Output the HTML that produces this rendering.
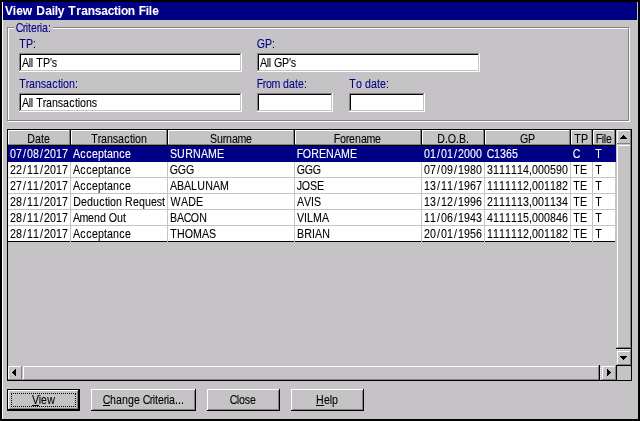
<!DOCTYPE html>
<html><head><meta charset="utf-8"><title>View Daily Transaction File</title>
<style>
html,body{margin:0;padding:0;background:#000;overflow:hidden}
#w{position:relative;width:640px;height:421px;background:#000;overflow:hidden}
#w i{position:absolute;display:block}
#w svg{position:absolute;left:0;top:0;will-change:transform}
#w text{font-family:"Liberation Sans",sans-serif;font-size:13px;white-space:pre;stroke-width:.1px}
#w text.b{font-weight:bold;stroke-width:.05px}
.focus{position:absolute;left:11px;top:393px;width:63px;height:12px;border:1px dotted #000}
</style></head><body>
<div id="w">
<i style="left:2px;top:2px;width:636px;height:417px;background:#c6c3c6"></i>
<i style="left:2px;top:2px;width:1px;height:417px;background:#fff"></i>
<i style="left:3px;top:2px;width:634px;height:18px;background:#000084"></i>
<i style="left:8px;top:28px;width:622px;height:1px;background:#fff"></i>
<i style="left:8px;top:121px;width:622px;height:1px;background:#fff"></i>
<i style="left:8px;top:28px;width:1px;height:94px;background:#fff"></i>
<i style="left:629px;top:28px;width:1px;height:94px;background:#fff"></i>
<i style="left:7px;top:27px;width:622px;height:1px;background:#848284"></i>
<i style="left:7px;top:120px;width:622px;height:1px;background:#848284"></i>
<i style="left:7px;top:27px;width:1px;height:94px;background:#848284"></i>
<i style="left:628px;top:27px;width:1px;height:94px;background:#848284"></i>
<i style="left:14px;top:27px;width:39px;height:2px;background:#c6c3c6"></i>
<i style="left:19px;top:53px;width:223px;height:19px;background:#fff"></i>
<i style="left:19px;top:53px;width:223px;height:1px;background:#848284"></i>
<i style="left:19px;top:53px;width:1px;height:19px;background:#848284"></i>
<i style="left:20px;top:54px;width:221px;height:1px;background:#000"></i>
<i style="left:20px;top:54px;width:1px;height:17px;background:#000"></i>
<i style="left:20px;top:70px;width:221px;height:1px;background:#c6c3c6"></i>
<i style="left:240px;top:54px;width:1px;height:17px;background:#c6c3c6"></i>
<i style="left:19px;top:71px;width:223px;height:1px;background:#fff"></i>
<i style="left:241px;top:53px;width:1px;height:19px;background:#fff"></i>
<i style="left:257px;top:53px;width:223px;height:19px;background:#fff"></i>
<i style="left:257px;top:53px;width:223px;height:1px;background:#848284"></i>
<i style="left:257px;top:53px;width:1px;height:19px;background:#848284"></i>
<i style="left:258px;top:54px;width:221px;height:1px;background:#000"></i>
<i style="left:258px;top:54px;width:1px;height:17px;background:#000"></i>
<i style="left:258px;top:70px;width:221px;height:1px;background:#c6c3c6"></i>
<i style="left:478px;top:54px;width:1px;height:17px;background:#c6c3c6"></i>
<i style="left:257px;top:71px;width:223px;height:1px;background:#fff"></i>
<i style="left:479px;top:53px;width:1px;height:19px;background:#fff"></i>
<i style="left:19px;top:93px;width:223px;height:19px;background:#fff"></i>
<i style="left:19px;top:93px;width:223px;height:1px;background:#848284"></i>
<i style="left:19px;top:93px;width:1px;height:19px;background:#848284"></i>
<i style="left:20px;top:94px;width:221px;height:1px;background:#000"></i>
<i style="left:20px;top:94px;width:1px;height:17px;background:#000"></i>
<i style="left:20px;top:110px;width:221px;height:1px;background:#c6c3c6"></i>
<i style="left:240px;top:94px;width:1px;height:17px;background:#c6c3c6"></i>
<i style="left:19px;top:111px;width:223px;height:1px;background:#fff"></i>
<i style="left:241px;top:93px;width:1px;height:19px;background:#fff"></i>
<i style="left:257px;top:93px;width:76px;height:19px;background:#fff"></i>
<i style="left:257px;top:93px;width:76px;height:1px;background:#848284"></i>
<i style="left:257px;top:93px;width:1px;height:19px;background:#848284"></i>
<i style="left:258px;top:94px;width:74px;height:1px;background:#000"></i>
<i style="left:258px;top:94px;width:1px;height:17px;background:#000"></i>
<i style="left:258px;top:110px;width:74px;height:1px;background:#c6c3c6"></i>
<i style="left:331px;top:94px;width:1px;height:17px;background:#c6c3c6"></i>
<i style="left:257px;top:111px;width:76px;height:1px;background:#fff"></i>
<i style="left:332px;top:93px;width:1px;height:19px;background:#fff"></i>
<i style="left:349px;top:93px;width:76px;height:19px;background:#fff"></i>
<i style="left:349px;top:93px;width:76px;height:1px;background:#848284"></i>
<i style="left:349px;top:93px;width:1px;height:19px;background:#848284"></i>
<i style="left:350px;top:94px;width:74px;height:1px;background:#000"></i>
<i style="left:350px;top:94px;width:1px;height:17px;background:#000"></i>
<i style="left:350px;top:110px;width:74px;height:1px;background:#c6c3c6"></i>
<i style="left:423px;top:94px;width:1px;height:17px;background:#c6c3c6"></i>
<i style="left:349px;top:111px;width:76px;height:1px;background:#fff"></i>
<i style="left:424px;top:93px;width:1px;height:19px;background:#fff"></i>
<i style="left:7px;top:129px;width:625px;height:252px;background:#000"></i>
<i style="left:8px;top:130px;width:623px;height:250px;background:#c6c3c6"></i>
<i style="left:8px;top:130px;width:62px;height:1px;background:#fff"></i>
<i style="left:8px;top:130px;width:1px;height:15px;background:#fff"></i>
<i style="left:8px;top:144px;width:62px;height:1px;background:#848284"></i>
<i style="left:69px;top:130px;width:1px;height:15px;background:#848284"></i>
<i style="left:70px;top:130px;width:1px;height:16px;background:#000"></i>
<i style="left:71px;top:130px;width:96px;height:1px;background:#fff"></i>
<i style="left:71px;top:130px;width:1px;height:15px;background:#fff"></i>
<i style="left:71px;top:144px;width:96px;height:1px;background:#848284"></i>
<i style="left:166px;top:130px;width:1px;height:15px;background:#848284"></i>
<i style="left:167px;top:130px;width:1px;height:16px;background:#000"></i>
<i style="left:168px;top:130px;width:126px;height:1px;background:#fff"></i>
<i style="left:168px;top:130px;width:1px;height:15px;background:#fff"></i>
<i style="left:168px;top:144px;width:126px;height:1px;background:#848284"></i>
<i style="left:293px;top:130px;width:1px;height:15px;background:#848284"></i>
<i style="left:294px;top:130px;width:1px;height:16px;background:#000"></i>
<i style="left:295px;top:130px;width:126px;height:1px;background:#fff"></i>
<i style="left:295px;top:130px;width:1px;height:15px;background:#fff"></i>
<i style="left:295px;top:144px;width:126px;height:1px;background:#848284"></i>
<i style="left:420px;top:130px;width:1px;height:15px;background:#848284"></i>
<i style="left:421px;top:130px;width:1px;height:16px;background:#000"></i>
<i style="left:422px;top:130px;width:62px;height:1px;background:#fff"></i>
<i style="left:422px;top:130px;width:1px;height:15px;background:#fff"></i>
<i style="left:422px;top:144px;width:62px;height:1px;background:#848284"></i>
<i style="left:483px;top:130px;width:1px;height:15px;background:#848284"></i>
<i style="left:484px;top:130px;width:1px;height:16px;background:#000"></i>
<i style="left:485px;top:130px;width:85px;height:1px;background:#fff"></i>
<i style="left:485px;top:130px;width:1px;height:15px;background:#fff"></i>
<i style="left:485px;top:144px;width:85px;height:1px;background:#848284"></i>
<i style="left:569px;top:130px;width:1px;height:15px;background:#848284"></i>
<i style="left:570px;top:130px;width:1px;height:16px;background:#000"></i>
<i style="left:571px;top:130px;width:21px;height:1px;background:#fff"></i>
<i style="left:571px;top:130px;width:1px;height:15px;background:#fff"></i>
<i style="left:571px;top:144px;width:21px;height:1px;background:#848284"></i>
<i style="left:591px;top:130px;width:1px;height:15px;background:#848284"></i>
<i style="left:592px;top:130px;width:1px;height:16px;background:#000"></i>
<i style="left:593px;top:130px;width:22px;height:1px;background:#fff"></i>
<i style="left:593px;top:130px;width:1px;height:15px;background:#fff"></i>
<i style="left:593px;top:144px;width:22px;height:1px;background:#848284"></i>
<i style="left:614px;top:130px;width:1px;height:15px;background:#848284"></i>
<i style="left:615px;top:130px;width:1px;height:16px;background:#000"></i>
<i style="left:8px;top:145px;width:608px;height:1px;background:#000"></i>
<i style="left:8px;top:146px;width:608px;height:16px;background:#000084"></i>
<i style="left:8px;top:162px;width:607px;height:79px;background:#fff"></i>
<i style="left:8px;top:177px;width:607px;height:1px;background:#c6c3c6"></i>
<i style="left:8px;top:193px;width:607px;height:1px;background:#c6c3c6"></i>
<i style="left:8px;top:209px;width:607px;height:1px;background:#c6c3c6"></i>
<i style="left:8px;top:225px;width:607px;height:1px;background:#c6c3c6"></i>
<i style="left:8px;top:241px;width:607px;height:1px;background:#000"></i>
<i style="left:70px;top:162px;width:1px;height:80px;background:#c6c3c6"></i>
<i style="left:167px;top:162px;width:1px;height:80px;background:#c6c3c6"></i>
<i style="left:294px;top:162px;width:1px;height:80px;background:#c6c3c6"></i>
<i style="left:421px;top:162px;width:1px;height:80px;background:#c6c3c6"></i>
<i style="left:484px;top:162px;width:1px;height:80px;background:#c6c3c6"></i>
<i style="left:570px;top:162px;width:1px;height:80px;background:#c6c3c6"></i>
<i style="left:592px;top:162px;width:1px;height:80px;background:#c6c3c6"></i>
<i style="left:617px;top:130px;width:14px;height:1px;background:#fff"></i>
<i style="left:617px;top:130px;width:1px;height:14px;background:#fff"></i>
<i style="left:617px;top:143px;width:14px;height:1px;background:#848284"></i>
<i style="left:630px;top:130px;width:1px;height:14px;background:#848284"></i>
<i style="left:623px;top:135px;width:1px;height:1px;background:#000"></i>
<i style="left:622px;top:136px;width:3px;height:1px;background:#000"></i>
<i style="left:621px;top:137px;width:5px;height:1px;background:#000"></i>
<i style="left:620px;top:138px;width:7px;height:1px;background:#000"></i>
<i style="left:617px;top:145px;width:13px;height:1px;background:#fff"></i>
<i style="left:617px;top:145px;width:1px;height:202px;background:#fff"></i>
<i style="left:630px;top:144px;width:1px;height:204px;background:#848284"></i>
<i style="left:617px;top:347px;width:14px;height:1px;background:#848284"></i>
<i style="left:616px;top:348px;width:16px;height:1px;background:#000"></i>
<i style="left:617px;top:349px;width:1px;height:1px;background:#fff"></i>
<i style="left:619px;top:349px;width:1px;height:1px;background:#fff"></i>
<i style="left:621px;top:349px;width:1px;height:1px;background:#fff"></i>
<i style="left:623px;top:349px;width:1px;height:1px;background:#fff"></i>
<i style="left:625px;top:349px;width:1px;height:1px;background:#fff"></i>
<i style="left:627px;top:349px;width:1px;height:1px;background:#fff"></i>
<i style="left:629px;top:349px;width:1px;height:1px;background:#fff"></i>
<i style="left:617px;top:351px;width:13px;height:1px;background:#fff"></i>
<i style="left:617px;top:351px;width:1px;height:13px;background:#fff"></i>
<i style="left:630px;top:350px;width:1px;height:15px;background:#848284"></i>
<i style="left:617px;top:364px;width:14px;height:1px;background:#848284"></i>
<i style="left:620px;top:356px;width:7px;height:1px;background:#000"></i>
<i style="left:621px;top:357px;width:5px;height:1px;background:#000"></i>
<i style="left:622px;top:358px;width:3px;height:1px;background:#000"></i>
<i style="left:623px;top:359px;width:1px;height:1px;background:#000"></i>
<i style="left:616px;top:365px;width:16px;height:1px;background:#000"></i>
<i style="left:616px;top:365px;width:1px;height:16px;background:#000"></i>
<i style="left:8px;top:366px;width:14px;height:1px;background:#fff"></i>
<i style="left:8px;top:366px;width:1px;height:14px;background:#fff"></i>
<i style="left:8px;top:379px;width:14px;height:1px;background:#848284"></i>
<i style="left:21px;top:366px;width:1px;height:14px;background:#848284"></i>
<i style="left:12px;top:372px;width:1px;height:1px;background:#000"></i>
<i style="left:13px;top:371px;width:1px;height:3px;background:#000"></i>
<i style="left:14px;top:370px;width:1px;height:5px;background:#000"></i>
<i style="left:15px;top:369px;width:1px;height:7px;background:#000"></i>
<i style="left:23px;top:366px;width:575px;height:1px;background:#fff"></i>
<i style="left:23px;top:366px;width:1px;height:13px;background:#fff"></i>
<i style="left:23px;top:379px;width:576px;height:1px;background:#848284"></i>
<i style="left:598px;top:366px;width:1px;height:14px;background:#848284"></i>
<i style="left:599px;top:365px;width:1px;height:16px;background:#000"></i>
<i style="left:600px;top:366px;width:1px;height:1px;background:#fff"></i>
<i style="left:600px;top:368px;width:1px;height:1px;background:#fff"></i>
<i style="left:600px;top:370px;width:1px;height:1px;background:#fff"></i>
<i style="left:600px;top:372px;width:1px;height:1px;background:#fff"></i>
<i style="left:600px;top:374px;width:1px;height:1px;background:#fff"></i>
<i style="left:600px;top:376px;width:1px;height:1px;background:#fff"></i>
<i style="left:600px;top:378px;width:1px;height:1px;background:#fff"></i>
<i style="left:602px;top:366px;width:13px;height:1px;background:#fff"></i>
<i style="left:602px;top:366px;width:1px;height:13px;background:#fff"></i>
<i style="left:615px;top:366px;width:1px;height:14px;background:#848284"></i>
<i style="left:602px;top:379px;width:14px;height:1px;background:#848284"></i>
<i style="left:607px;top:369px;width:1px;height:7px;background:#000"></i>
<i style="left:608px;top:370px;width:1px;height:5px;background:#000"></i>
<i style="left:609px;top:371px;width:1px;height:3px;background:#000"></i>
<i style="left:610px;top:372px;width:1px;height:1px;background:#000"></i>
<i style="left:7px;top:389px;width:73px;height:22px;background:#000"></i>
<i style="left:8px;top:390px;width:71px;height:20px;background:#c6c3c6"></i>
<i style="left:8px;top:390px;width:71px;height:1px;background:#fff"></i>
<i style="left:8px;top:390px;width:1px;height:20px;background:#fff"></i>
<i style="left:9px;top:408px;width:69px;height:1px;background:#848284"></i>
<i style="left:77px;top:391px;width:1px;height:18px;background:#848284"></i>
<i style="left:8px;top:409px;width:71px;height:1px;background:#000"></i>
<i style="left:78px;top:390px;width:1px;height:20px;background:#000"></i>
<i style="left:91px;top:389px;width:105px;height:1px;background:#fff"></i>
<i style="left:91px;top:389px;width:1px;height:22px;background:#fff"></i>
<i style="left:92px;top:409px;width:103px;height:1px;background:#848284"></i>
<i style="left:194px;top:390px;width:1px;height:20px;background:#848284"></i>
<i style="left:91px;top:410px;width:105px;height:1px;background:#000"></i>
<i style="left:195px;top:389px;width:1px;height:22px;background:#000"></i>
<i style="left:207px;top:389px;width:73px;height:1px;background:#fff"></i>
<i style="left:207px;top:389px;width:1px;height:22px;background:#fff"></i>
<i style="left:208px;top:409px;width:71px;height:1px;background:#848284"></i>
<i style="left:278px;top:390px;width:1px;height:20px;background:#848284"></i>
<i style="left:207px;top:410px;width:73px;height:1px;background:#000"></i>
<i style="left:279px;top:389px;width:1px;height:22px;background:#000"></i>
<i style="left:291px;top:389px;width:73px;height:1px;background:#fff"></i>
<i style="left:291px;top:389px;width:1px;height:22px;background:#fff"></i>
<i style="left:292px;top:409px;width:71px;height:1px;background:#848284"></i>
<i style="left:362px;top:390px;width:1px;height:20px;background:#848284"></i>
<i style="left:291px;top:410px;width:73px;height:1px;background:#000"></i>
<i style="left:363px;top:389px;width:1px;height:22px;background:#000"></i>
<i style="left:32px;top:405px;width:7px;height:1px;background:#000"></i>
<i style="left:103px;top:405px;width:7px;height:1px;background:#000"></i>
<i style="left:316px;top:405px;width:8px;height:1px;background:#000"></i>
<div class="focus"></div>
<svg width="640" height="421" viewBox="0 0 640 421">
<text class="b" transform="scale(0.92 1)" x="5.4 14.0 17.6 24.8 35.2 39.3 49.1 56.3 59.6 62.7 69.9 74.3 82.8 88.2 95.5 102.9 110.0 117.0 123.9 128.1 131.4 139.0 147.1 150.9 158.5 161.8 165.4" y="15" fill="#fff" stroke="#fff">View Daily Transaction File</text>
<text transform="scale(0.82 1)" x="19.1 27.7 31.5 34.2 37.8 44.8 48.6 51.3 58.6" y="32" fill="#000084" stroke="#000084">Criteria:</text>
<text transform="scale(0.82 1)" x="23.5 31.6 40.3" y="48" fill="#000084" stroke="#000084">TP:</text>
<text transform="scale(0.82 1)" x="313.2 323.1 331.7" y="48" fill="#000084" stroke="#000084">GP:</text>
<text transform="scale(0.82 1)" x="23.5 31.4 35.4 42.7 49.8 56.1 63.8 70.8 74.2 76.9 84.2 91.5" y="88" fill="#000084" stroke="#000084">Transaction:</text>
<text transform="scale(0.82 1)" x="313.1 320.4 324.4 331.2 341.5 345.2 352.5 359.8 363.5 370.8" y="88" fill="#000084" stroke="#000084">From date:</text>
<text transform="scale(0.82 1)" x="425.9 434.2 441.5 445.2 452.5 459.8 463.5 470.8" y="88" fill="#000084" stroke="#000084">To date:</text>
<text transform="scale(0.82 1)" x="26.8 35.1 37.6 40.3 44.2 52.4 61.0 63.2" y="67" fill="#000" stroke="#000">All TP's</text>
<text transform="scale(0.82 1)" x="317.0 325.4 327.8 330.5 334.0 343.8 352.4 354.7" y="67" fill="#000" stroke="#000">All GP's</text>
<text transform="scale(0.82 1)" x="26.8 35.1 37.6 40.3 44.2 52.1 56.1 63.5 70.5 76.9 84.6 91.5 94.9 97.6 104.9 112.0" y="107" fill="#000" stroke="#000">All Transactions</text>
<text transform="scale(0.82 1)" x="33.1 42.7 50.0 53.7" y="143" fill="#000" stroke="#000">Date</text>
<text transform="scale(0.82 1)" x="111.3 119.2 123.2 130.5 137.6 143.9 151.6 158.6 162.0 164.7 172.0" y="143" fill="#000" stroke="#000">Transaction</text>
<text transform="scale(0.82 1)" x="256.0 264.7 271.6 275.7 283.0 289.7 300.0" y="143" fill="#000" stroke="#000">Surname</text>
<text transform="scale(0.82 1)" x="407.0 414.7 421.6 425.7 433.0 440.3 447.0 457.4" y="143" fill="#000" stroke="#000">Forename</text>
<text transform="scale(0.82 1)" x="533.1 542.7 546.2 556.1 559.7 568.3" y="143" fill="#000" stroke="#000">D.O.B.</text>
<text transform="scale(0.82 1)" x="634.0 643.8" y="143" fill="#000" stroke="#000">GP</text>
<text transform="scale(0.82 1)" x="700.3 708.5" y="143" fill="#000" stroke="#000">TP</text>
<text transform="scale(0.82 1)" x="726.5 733.9 736.4 739.1" y="143" fill="#000" stroke="#000">File</text>
<text transform="scale(0.82 1)" x="12.2 19.6 28.1 33.0 40.3 48.8 53.7 61.0 68.3 75.7" y="158" fill="#fff" stroke="#fff">07/08/2017</text>
<text transform="scale(0.82 1)" x="89.0 98.0 105.3 112.2 119.6 126.9 130.5 137.8 145.5 152.5" y="158" fill="#fff" stroke="#fff">Acceptance</text>
<text transform="scale(0.82 1)" x="207.2 216.0 225.8 235.5 245.1 253.7 264.6" y="158" fill="#fff" stroke="#fff">SURNAME</text>
<text transform="scale(0.82 1)" x="361.9 369.3 379.5 389.0 397.7 407.2 415.9 426.8" y="158" fill="#fff" stroke="#fff">FORENAME</text>
<text transform="scale(0.82 1)" x="517.1 524.4 533.0 537.8 545.2 553.7 558.6 565.9 573.2 580.5" y="158" fill="#fff" stroke="#fff">01/01/2000</text>
<text transform="scale(0.82 1)" x="593.5 602.5 609.8 617.1 624.4" y="158" fill="#fff" stroke="#fff">C1365</text>
<text transform="scale(0.82 1)" x="698.4" y="158" fill="#fff" stroke="#fff">C</text>
<text transform="scale(0.82 1)" x="725.9" y="158" fill="#fff" stroke="#fff">T</text>
<text transform="scale(0.82 1)" x="12.2 19.6 28.1 33.0 40.3 48.8 53.7 61.0 68.3 75.7" y="174" fill="#000" stroke="#000">22/11/2017</text>
<text transform="scale(0.82 1)" x="89.0 98.0 105.3 112.2 119.6 126.9 130.5 137.8 145.5 152.5" y="174" fill="#000" stroke="#000">Acceptance</text>
<text transform="scale(0.82 1)" x="207.1 216.9 226.7" y="174" fill="#000" stroke="#000">GGG</text>
<text transform="scale(0.82 1)" x="362.0 371.8 381.5" y="174" fill="#000" stroke="#000">GGG</text>
<text transform="scale(0.82 1)" x="517.1 524.4 533.0 537.8 545.2 553.7 558.6 565.9 573.2 580.5" y="174" fill="#000" stroke="#000">07/09/1980</text>
<text transform="scale(0.82 1)" x="593.9 601.3 608.6 615.9 623.2 630.5 637.8 645.1 648.8 656.1 663.5 670.8 678.1 685.4" y="174" fill="#000" stroke="#000">3111114,000590</text>
<text transform="scale(0.82 1)" x="699.1 707.2" y="174" fill="#000" stroke="#000">TE</text>
<text transform="scale(0.82 1)" x="725.9" y="174" fill="#000" stroke="#000">T</text>
<text transform="scale(0.82 1)" x="12.2 19.6 28.1 33.0 40.3 48.8 53.7 61.0 68.3 75.7" y="190" fill="#000" stroke="#000">27/11/2017</text>
<text transform="scale(0.82 1)" x="89.0 98.0 105.3 112.2 119.6 126.9 130.5 137.8 145.5 152.5" y="190" fill="#000" stroke="#000">Acceptance</text>
<text transform="scale(0.82 1)" x="207.2 215.8 224.3 233.0 240.4 250.2 259.7 268.4" y="190" fill="#000" stroke="#000">ABALUNAM</text>
<text transform="scale(0.82 1)" x="362.0 368.1 378.0 386.5" y="190" fill="#000" stroke="#000">JOSE</text>
<text transform="scale(0.82 1)" x="517.1 524.4 533.0 537.8 545.2 553.7 558.6 565.9 573.2 580.5" y="190" fill="#000" stroke="#000">13/11/1967</text>
<text transform="scale(0.82 1)" x="593.9 601.3 608.6 615.9 623.2 630.5 637.8 645.1 648.8 656.1 663.5 670.8 678.1 685.4" y="190" fill="#000" stroke="#000">1111112,001182</text>
<text transform="scale(0.82 1)" x="699.1 707.2" y="190" fill="#000" stroke="#000">TE</text>
<text transform="scale(0.82 1)" x="725.9" y="190" fill="#000" stroke="#000">T</text>
<text transform="scale(0.82 1)" x="12.2 19.6 28.1 33.0 40.3 48.8 53.7 61.0 68.3 75.7" y="206" fill="#000" stroke="#000">28/11/2017</text>
<text transform="scale(0.82 1)" x="89.2 98.8 106.1 113.5 121.1 128.1 131.5 134.2 141.5 148.8 152.6 162.2 169.6 176.9 184.2 191.3 197.6" y="206" fill="#000" stroke="#000">Deduction Request</text>
<text transform="scale(0.82 1)" x="207.9 220.7 229.5 239.0" y="206" fill="#000" stroke="#000">WADE</text>
<text transform="scale(0.82 1)" x="362.1 370.7 379.3 382.9" y="206" fill="#000" stroke="#000">AVIS</text>
<text transform="scale(0.82 1)" x="517.1 524.4 533.0 537.8 545.2 553.7 558.6 565.9 573.2 580.5" y="206" fill="#000" stroke="#000">13/12/1996</text>
<text transform="scale(0.82 1)" x="593.9 601.3 608.6 615.9 623.2 630.5 637.8 645.1 648.8 656.1 663.5 670.8 678.1 685.4" y="206" fill="#000" stroke="#000">2111113,001134</text>
<text transform="scale(0.82 1)" x="699.1 707.2" y="206" fill="#000" stroke="#000">TE</text>
<text transform="scale(0.82 1)" x="725.9" y="206" fill="#000" stroke="#000">T</text>
<text transform="scale(0.82 1)" x="12.2 19.6 28.1 33.0 40.3 48.8 53.7 61.0 68.3 75.7" y="222" fill="#000" stroke="#000">28/11/2017</text>
<text transform="scale(0.82 1)" x="89.0 97.0 107.4 114.7 122.0 129.3 132.7 142.7 150.0" y="222" fill="#000" stroke="#000">Amend Out</text>
<text transform="scale(0.82 1)" x="207.2 215.8 224.0 232.7 242.9" y="222" fill="#000" stroke="#000">BACON</text>
<text transform="scale(0.82 1)" x="362.1 370.8 374.4 381.8 392.6" y="222" fill="#000" stroke="#000">VILMA</text>
<text transform="scale(0.82 1)" x="517.1 524.4 533.0 537.8 545.2 553.7 558.6 565.9 573.2 580.5" y="222" fill="#000" stroke="#000">11/06/1943</text>
<text transform="scale(0.82 1)" x="593.9 601.3 608.6 615.9 623.2 630.5 637.8 645.1 648.8 656.1 663.5 670.8 678.1 685.4" y="222" fill="#000" stroke="#000">4111115,000846</text>
<text transform="scale(0.82 1)" x="699.1 707.2" y="222" fill="#000" stroke="#000">TE</text>
<text transform="scale(0.82 1)" x="725.9" y="222" fill="#000" stroke="#000">T</text>
<text transform="scale(0.82 1)" x="12.2 19.6 28.1 33.0 40.3 48.8 53.7 61.0 68.3 75.7" y="238" fill="#000" stroke="#000">28/11/2017</text>
<text transform="scale(0.82 1)" x="89.0 98.0 105.3 112.2 119.6 126.9 130.5 137.8 145.5 152.5" y="238" fill="#000" stroke="#000">Acceptance</text>
<text transform="scale(0.82 1)" x="207.6 216.0 225.4 235.4 246.3 254.8" y="238" fill="#000" stroke="#000">THOMAS</text>
<text transform="scale(0.82 1)" x="362.1 370.9 380.5 384.1 392.9" y="238" fill="#000" stroke="#000">BRIAN</text>
<text transform="scale(0.82 1)" x="517.1 524.4 533.0 537.8 545.2 553.7 558.6 565.9 573.2 580.5" y="238" fill="#000" stroke="#000">20/01/1956</text>
<text transform="scale(0.82 1)" x="593.9 601.3 608.6 615.9 623.2 630.5 637.8 645.1 648.8 656.1 663.5 670.8 678.1 685.4" y="238" fill="#000" stroke="#000">1111112,001182</text>
<text transform="scale(0.82 1)" x="699.1 707.2" y="238" fill="#000" stroke="#000">TE</text>
<text transform="scale(0.82 1)" x="725.9" y="238" fill="#000" stroke="#000">T</text>
<text transform="scale(0.82 1)" x="39.0 47.3 50.0 57.5" y="404" fill="#000" stroke="#000">View</text>
<text transform="scale(0.82 1)" x="125.2 134.2 141.5 148.8 156.1 163.5 170.8 174.0 182.6 186.4 189.0 192.7 199.7 203.4 206.1 213.4 217.1 220.8" y="404" fill="#000" stroke="#000">Change Criteria...</text>
<text transform="scale(0.82 1)" x="280.1 288.8 291.5 298.6 304.9" y="404" fill="#000" stroke="#000">Close</text>
<text transform="scale(0.82 1)" x="385.5 395.2 402.2 404.9" y="404" fill="#000" stroke="#000">Help</text>
</svg>
</div>
</body></html>
